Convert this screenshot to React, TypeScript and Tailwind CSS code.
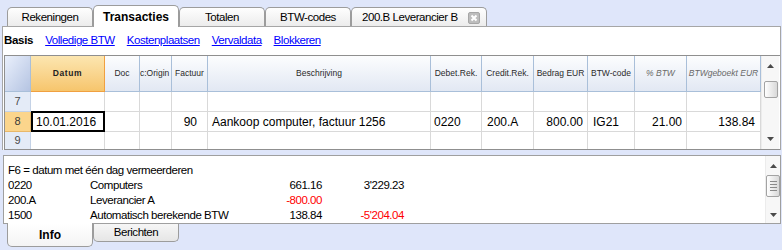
import React from "react";

const GRID = "grid grid-cols-[26px_74px_35px_32px_36px_223px_51px_52px_54px_47px_52px_74px]";

function UpArrow() {
  return (
    <svg width="7" height="4" viewBox="0 0 7 4">
      <path d="M0 4 L3.5 0 L7 4 Z" fill="#4a4a4a" />
    </svg>
  );
}

function DownArrow() {
  return (
    <svg width="7" height="4" viewBox="0 0 7 4">
      <path d="M0 0 L3.5 4 L7 0 Z" fill="#4a4a4a" />
    </svg>
  );
}

function TopTabs() {
  const tabs = [
    { label: "Rekeningen" },
    { label: "Transacties", active: true },
    { label: "Totalen" },
    { label: "BTW-codes" },
  ];

  return (
    <div className="flex items-end h-[26px] pl-[7px]">
      {tabs.map((t) =>
        t.active ? (
          <div
            key={t.label}
            className="relative z-10 -mb-px w-[86px] h-[22px] flex items-center justify-center bg-white border border-b-0 border-[#9c9c9c] rounded-t-[5px] text-[12px] font-bold text-black"
          >
            {t.label}
          </div>
        ) : (
          <div
            key={t.label}
            className="w-[86px] h-[19px] flex items-center justify-center pt-px bg-linear-to-b from-[#fefefe] to-[#ececec] border border-b-0 border-[#9c9c9c] rounded-t-[5px] text-[11.5px] tracking-[-0.45px] text-black"
          >
            {t.label}
          </div>
        )
      )}
      <div className="w-[136px] h-[19px] flex items-center pl-[10px] pt-px bg-linear-to-b from-[#fefefe] to-[#ececec] border border-b-0 border-[#9c9c9c] rounded-t-[5px] text-[11.5px] tracking-[-0.45px] text-black">
        <span>200.B Leverancier B</span>
        {/* close box */}
        <div className="ml-auto mr-[6px] w-[12px] h-[12px] flex items-center justify-center rounded-[2px] bg-[#bdbdbd] border border-[#a6a6a6]">
          <svg width="8" height="8" viewBox="0 0 8 8">
            <path d="M1.5 1.5 L6.5 6.5 M6.5 1.5 L1.5 6.5" stroke="#ffffff" strokeWidth="2" />
          </svg>
        </div>
      </div>
    </div>
  );
}

function Grid() {
  const headers = [
    { label: "Datum", datum: true },
    { label: "Doc" },
    { label: "c:Origin", left: true },
    { label: "Factuur" },
    { label: "Beschrijving" },
    { label: "Debet.Rek." },
    { label: "Credit.Rek." },
    { label: "Bedrag EUR" },
    { label: "BTW-code" },
    { label: "% BTW", italic: true },
    { label: "BTWgeboekt EUR", italic: true },
  ];

  const row8 = [
    { t: "90", cls: "justify-end pr-[10px]" },
    { t: "Aankoop computer, factuur 1256", cls: "pl-[4px]" },
    { t: "0220", cls: "pl-[3px]" },
    { t: "200.A", cls: "pl-[5px]" },
    { t: "800.00", cls: "justify-end pr-[4px]" },
    { t: "IG21", cls: "pl-[5px]" },
    { t: "21.00", cls: "justify-end pr-[4px]" },
    { t: "138.84", cls: "justify-end pr-[5px]" },
  ];

  return (
    <div className="ml-px flex border-l border-t border-b border-[#8f8f8f]">
      <div className="w-[756px]">
        {/* header */}
        <div className={`${GRID} h-[36px]`}>
          <div className="bg-linear-to-br from-[#eaf0fc] to-[#b5c4e2] border-r border-b border-[#a9bfd9]" />
          {headers.map((h) =>
            h.datum ? (
              <div
                key={h.label}
                className="flex items-center justify-center bg-linear-to-b from-[#fce6b0] to-[#f6c56c] border-r border-b border-[#f0a040] text-[8.5px] font-bold tracking-[0.6px] text-[#222]"
              >
                {h.label}
              </div>
            ) : (
              <div
                key={h.label}
                className={`flex items-center overflow-hidden whitespace-nowrap bg-linear-to-b from-[#fcfdfe] to-[#e2e8f3] border-r border-b border-[#a9bfd9] text-[8.5px] ${
                  h.left ? "justify-start" : "justify-center"
                } ${h.italic ? "italic text-[#6a6a6a]" : "text-[#2a2a2a]"}`}
              >
                {h.label}
              </div>
            )
          )}
        </div>

        {/* row 7 */}
        <div className={`${GRID} h-[20px]`}>
          <div className="flex items-center justify-center bg-[#e4ebf7] border-r border-b border-[#c4d2e6] text-[11px] text-[#4a4a4a]">7</div>
          {headers.map((h) => (
            <div key={h.label} className="border-r border-b border-[#d9d9d9]" />
          ))}
        </div>

        {/* row 8 */}
        <div className={`${GRID} h-[20px] text-[12px] text-black`}>
          <div className="flex items-center justify-center bg-[#fbd58c] border-r border-b border-[#e8b86a] text-[11px] text-[#3a3a3a]">8</div>
          <div className="flex items-center pl-[3px] border-2 border-black -mt-px h-[21px]">10.01.2016</div>
          <div className="border-r border-b border-[#d9d9d9]" />
          <div className="border-r border-b border-[#d9d9d9]" />
          {row8.map((c) => (
            <div key={c.t} className={`flex items-center whitespace-nowrap overflow-hidden border-r border-b border-[#d9d9d9] ${c.cls}`}>
              {c.t}
            </div>
          ))}
        </div>

        {/* row 9 */}
        <div className={`${GRID} h-[17px]`}>
          <div className="flex items-center justify-center bg-[#e4ebf7] border-r border-[#c4d2e6] text-[11px] text-[#4a4a4a]">9</div>
          {headers.map((h) => (
            <div key={h.label} className="border-r border-[#d9d9d9]" />
          ))}
        </div>
      </div>

      {/* vertical scrollbar */}
      <div className="w-[18px] flex flex-col items-center bg-[#f7f7f7] border-l border-[#ececec]">
        <div className="h-[17px] flex items-center justify-center pt-[3px]">
          <UpArrow />
        </div>
        <div className="mt-[8px] w-[14px] h-[17px] rounded-[2px] border border-[#a3a3a3] bg-linear-to-r from-[#ffffff] to-[#d9d9d9]" />
        <div className="mt-auto h-[17px] flex items-center justify-center pb-[3px]">
          <DownArrow />
        </div>
      </div>
    </div>
  );
}

function InfoPanel() {
  const lines = [
    { a: "0220", b: "Computers", c: "661.16", d: "3'229.23" },
    { a: "200.A", b: "Leverancier A", c: "-800.00", cRed: true, d: "" },
    { a: "1500", b: "Automatisch berekende BTW", c: "138.84", d: "-5'204.04", dRed: true },
  ];

  return (
    <div className="ml-[3px] w-[778px] h-[69px] flex bg-white border border-[#9f9f9f]">
      <div className="flex-1 pt-[7px] pl-[4px] text-[11.5px] tracking-[-0.45px] leading-[15px] text-black overflow-hidden">
        <div>F6 = datum met één dag vermeerderen</div>
        {lines.map((l) => (
          <div key={l.a} className="flex whitespace-nowrap">
            <div className="w-[82px]">{l.a}</div>
            <div className="w-[170px]">{l.b}</div>
            <div className={`w-[62px] text-right ${l.cRed ? "text-[#ff0000]" : ""}`}>{l.c}</div>
            <div className={`w-[82px] text-right ${l.dRed ? "text-[#ff0000]" : ""}`}>{l.d}</div>
          </div>
        ))}
      </div>
      <div className="w-[15px] flex flex-col items-center bg-[#f7f7f7] border-l border-[#ececec]">
        <div className="h-[16px] flex items-center justify-center pt-[3px]">
          <UpArrow />
        </div>
        <div className="mt-[3px] w-[14px] h-[22px] flex flex-col items-center justify-center gap-[2px] rounded-[2px] border border-[#a3a3a3] bg-linear-to-r from-[#ffffff] to-[#d9d9d9]">
          <div className="w-[7px] h-px bg-[#8a8a8a]" />
          <div className="w-[7px] h-px bg-[#8a8a8a]" />
          <div className="w-[7px] h-px bg-[#8a8a8a]" />
          <div className="w-[7px] h-px bg-[#8a8a8a]" />
        </div>
        <div className="mt-auto h-[14px] flex items-center justify-center pb-[3px]">
          <DownArrow />
        </div>
      </div>
    </div>
  );
}

function BottomTabs() {
  return (
    <div className="flex items-start pl-[7px]">
      <div className="relative z-10 -mt-px w-[86px] h-[24px] flex items-center justify-center bg-linear-to-b from-[#ffffff] to-[#f4f4f4] border border-t-0 border-[#9c9c9c] rounded-b-[5px] text-[12px] font-bold text-black">
        Info
      </div>
      <div className="w-[86px] h-[18px] flex items-center justify-center bg-linear-to-b from-[#f6f6f6] to-[#e6e6e6] border border-t-0 border-[#9c9c9c] rounded-b-[5px] text-[11.5px] tracking-[-0.45px] text-black">
        Berichten
      </div>
    </div>
  );
}

export default function App() {
  return (
    <div className="w-[782px] h-[250px] overflow-hidden bg-[#dfe6fa] font-['Liberation_Sans',Arial,sans-serif]">
      <TopTabs />

      {/* main panel */}
      <div className="ml-[2px] w-[779px] bg-white border-l border-t border-r border-[#a6a6a6]">
        <div className="h-[28px] flex items-center gap-[12px] pl-[1px] text-[11.5px] tracking-[-0.45px]">
          <span className="font-bold tracking-[-0.3px] text-black">Basis</span>
          <a href="#" className="text-[#0000ff] underline">Volledige BTW</a>
          <a href="#" className="text-[#0000ff] underline">Kostenplaatsen</a>
          <a href="#" className="text-[#0000ff] underline">Vervaldata</a>
          <a href="#" className="text-[#0000ff] underline">Blokkeren</a>
        </div>
        <Grid />
      </div>

      <div className="h-[5px]" />
      <InfoPanel />
      <BottomTabs />
    </div>
  );
}
